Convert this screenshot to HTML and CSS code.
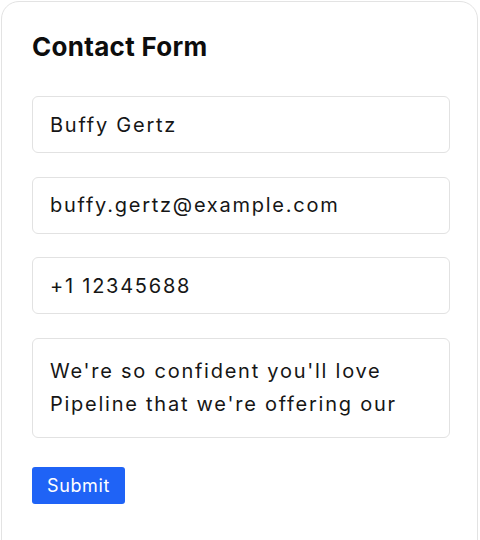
FILE: index.html
```html
<!DOCTYPE html>
<html lang="en">
<head>
<meta charset="utf-8">
<link rel="stylesheet" href="styles.css">
<title>Contact Form</title>
</head>
<body>
<form class="card">
  <h1 class="title">Contact Form</h1>
  <div class="field">Buffy Gertz</div>
  <div class="field">buffy.gertz@example.com</div>
  <div class="field">+1 12345688</div>
  <div class="field area">We're so confident you'll love Pipeline that we're offering our</div>
  <button type="button" class="submit">Submit</button>
</form>
</body>
</html>
```
FILE: styles.css
```css
html, body {
  margin: 0;
  padding: 0;
  background: #ffffff;
}
body {
  font-family: Inter, "Noto Sans", sans-serif;
  color: #111111;
}
.card {
  margin: 1px 2px 0 1px;
  height: 600px;
  box-sizing: border-box;
  border: 1px solid #e3e3e3;
  border-radius: 18px;
  padding: 29px 27px 30px 30px;
  display: flex;
  flex-direction: column;
  align-items: flex-start;
}
.title {
  margin: 0 0 33px;
  font-size: 26px;
  font-weight: 700;
  line-height: 32px;
  letter-spacing: 0.3px;
  color: #0d0d0d;
}
.field {
  box-sizing: border-box;
  width: 418px;
  height: 57px;
  border: 1.5px solid #e2e2e2;
  border-radius: 6px;
  padding: 0 17px;
  display: flex;
  align-items: center;
  font-size: 20px;
  letter-spacing: 1.75px;
  color: #161616;
  margin-bottom: 23.5px;
}
.field.area {
  height: 100px;
  align-items: flex-start;
  padding-top: 16px;
  line-height: 33px;
  margin-bottom: 29px;
}
.submit {
  font-family: Inter, "Noto Sans", sans-serif;
  border: none;
  border-radius: 3px;
  background: #1f63f6;
  color: #ffffff;
  font-size: 18px;
  letter-spacing: 0.6px;
  width: 93px;
  height: 37px;
  padding: 0;
}
```
